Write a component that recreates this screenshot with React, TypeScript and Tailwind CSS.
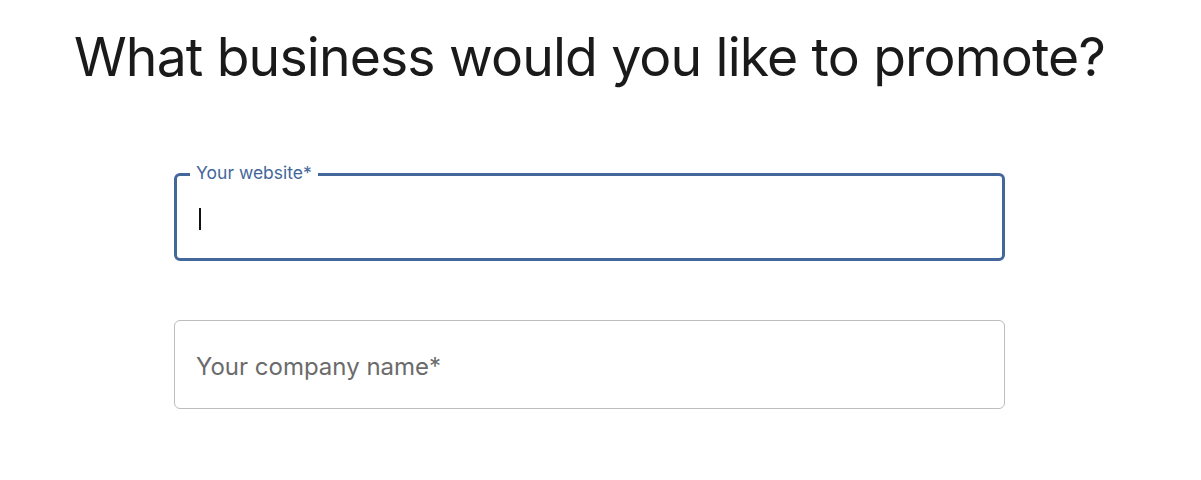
import React from "react";

export default function App() {
  return (
    <div className="w-[1201px] h-[480px] bg-white flex flex-col" style={{ fontFamily: "Inter, 'Noto Sans', sans-serif" }}>
      <h1 className="mt-[22px] ml-[74px] text-[53.5px] leading-[70px] text-[#1a1a1a] font-normal tracking-[-0.85px] whitespace-nowrap">
        What business would you like to promote?
      </h1>
      <div className="mt-[81px] ml-[174px] w-[831px] flex flex-col gap-[59px]">
        <div className="relative h-[88px] border-[3px] border-[#44679b] rounded-[6px] flex items-center pl-[22px]">
          <span className="absolute top-[-13px] left-[13px] bg-white px-[6px] text-[17.5px] leading-[20px] text-[#44679b]">Your website*</span>
          <div className="w-[2px] h-[22px] bg-[#111] mt-[3px]" />
        </div>
        <div className="h-[89px] border border-[#bdbdbd] rounded-[6px] flex items-center pl-[21px]">
          <span className="text-[24px] text-[#6b6b6b] mt-[4px]">Your company name*</span>
        </div>
      </div>
    </div>
  );
}
